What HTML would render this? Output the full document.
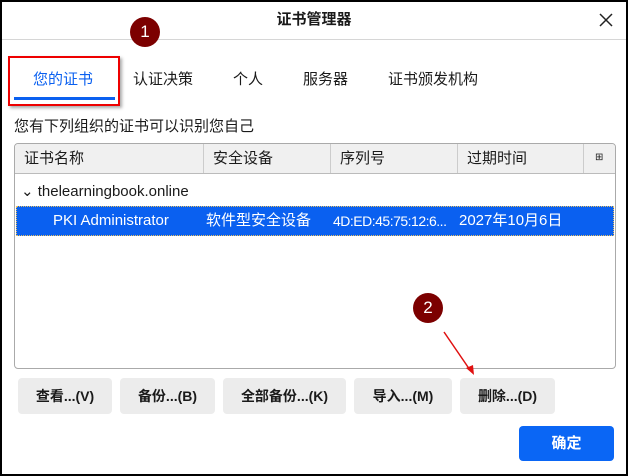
<!DOCTYPE html>
<html><head><meta charset="utf-8"><style>
*{box-sizing:border-box;margin:0;padding:0}
body{width:628px;height:476px;background:#000;position:relative;overflow:hidden;font-family:"Liberation Sans","Noto Sans CJK SC",sans-serif;font-size:15px;color:#1a1a1a}
.win{position:absolute;left:2px;top:2px;width:624px;height:472px;background:#fff}
.a{position:absolute}
.title{left:0;top:0;width:624px;height:38px;border-bottom:1px solid #d6d6d6;text-align:center;line-height:36px;font-weight:bold;font-size:15px}
.tab{top:66px;font-size:15px}
.th{position:absolute;top:0;height:29px;line-height:29px;padding-left:9px;border-right:1px solid #ccc;font-size:15px}
.btn{position:absolute;top:376px;height:36px;background:#ececec;border-radius:4px;text-align:center;line-height:36px;font-weight:bold;font-size:14px}
.badge{position:absolute;width:30px;height:30px;border-radius:50%;background:#7c0000;color:#fff;text-align:center;line-height:30px;font-size:17px}
</style></head><body>
<div class="win">
<div class="a title">证书管理器</div>
<svg class="a" style="left:596px;top:10px" width="16" height="16"><path d="M2 2L14 14M14 2L2 14" stroke="#222" stroke-width="1.5"/></svg>
<div class="badge" style="left:128px;top:15px">1</div>
<div class="a" style="left:6px;top:54px;width:112px;height:50px;border:2px solid #e00;box-shadow:2px 2px 3px #aaa"></div>
<div class="a tab" style="left:31px;color:#0a60f0">您的证书</div>
<div class="a" style="left:12px;top:95px;width:101px;height:3px;background:#0a60f0"></div>
<div class="a tab" style="left:131px">认证决策</div>
<div class="a tab" style="left:231px">个人</div>
<div class="a tab" style="left:301px">服务器</div>
<div class="a tab" style="left:386px">证书颁发机构</div>
<div class="a" style="left:12px;top:113px">您有下列组织的证书可以识别您自己</div>
<div class="a" style="left:12px;top:141px;width:602px;height:226px;border:1px solid #aaa;border-radius:4px;overflow:hidden">
 <div class="a" style="left:0;top:0;width:602px;height:30px;background:#f0f0f0;border-bottom:1px solid #bbb">
  <div class="th" style="left:0;width:189px">证书名称</div>
  <div class="th" style="left:189px;width:127px">安全设备</div>
  <div class="th" style="left:316px;width:127px">序列号</div>
  <div class="th" style="left:443px;width:126px">过期时间</div>
  <div class="a" style="left:580px;top:8px;font-size:10px">⊞</div>
 </div>
 <div class="a" style="left:6px;top:38px">⌄ thelearningbook.online</div>
 <div class="a" style="left:1px;top:62px;width:598px;height:30px;background:#0a60f0;border:1px dotted #e8c060;color:#fff;line-height:28px">
  <span class="a" style="left:36px">PKI Administrator</span>
  <span class="a" style="left:189px">软件型安全设备</span>
  <span class="a" style="left:316px;width:124px;white-space:nowrap;overflow:hidden;letter-spacing:-0.5px;font-size:14px">4D:ED:45:75:12:6...</span>
  <span class="a" style="left:442px">2027年10月6日</span>
 </div>
</div>
<div class="badge" style="left:411px;top:291px">2</div>
<svg class="a" style="left:0;top:0" width="624" height="472"><path d="M442 330L468 368" stroke="#e01010" stroke-width="1.5"/><path d="M464 366L472 373L471 363Z" fill="#e01010"/></svg>
<div class="btn" style="left:16px;width:94px">查看...(V)</div>
<div class="btn" style="left:118px;width:95px">备份...(B)</div>
<div class="btn" style="left:221px;width:123px">全部备份...(K)</div>
<div class="btn" style="left:352px;width:98px">导入...(M)</div>
<div class="btn" style="left:458px;width:95px">删除...(D)</div>
<div class="a" style="left:517px;top:424px;width:95px;height:35px;background:#0a66f5;border-radius:4px;color:#fff;font-weight:bold;text-align:center;line-height:35px;font-size:15px">确定</div>
</div>
</body></html>
